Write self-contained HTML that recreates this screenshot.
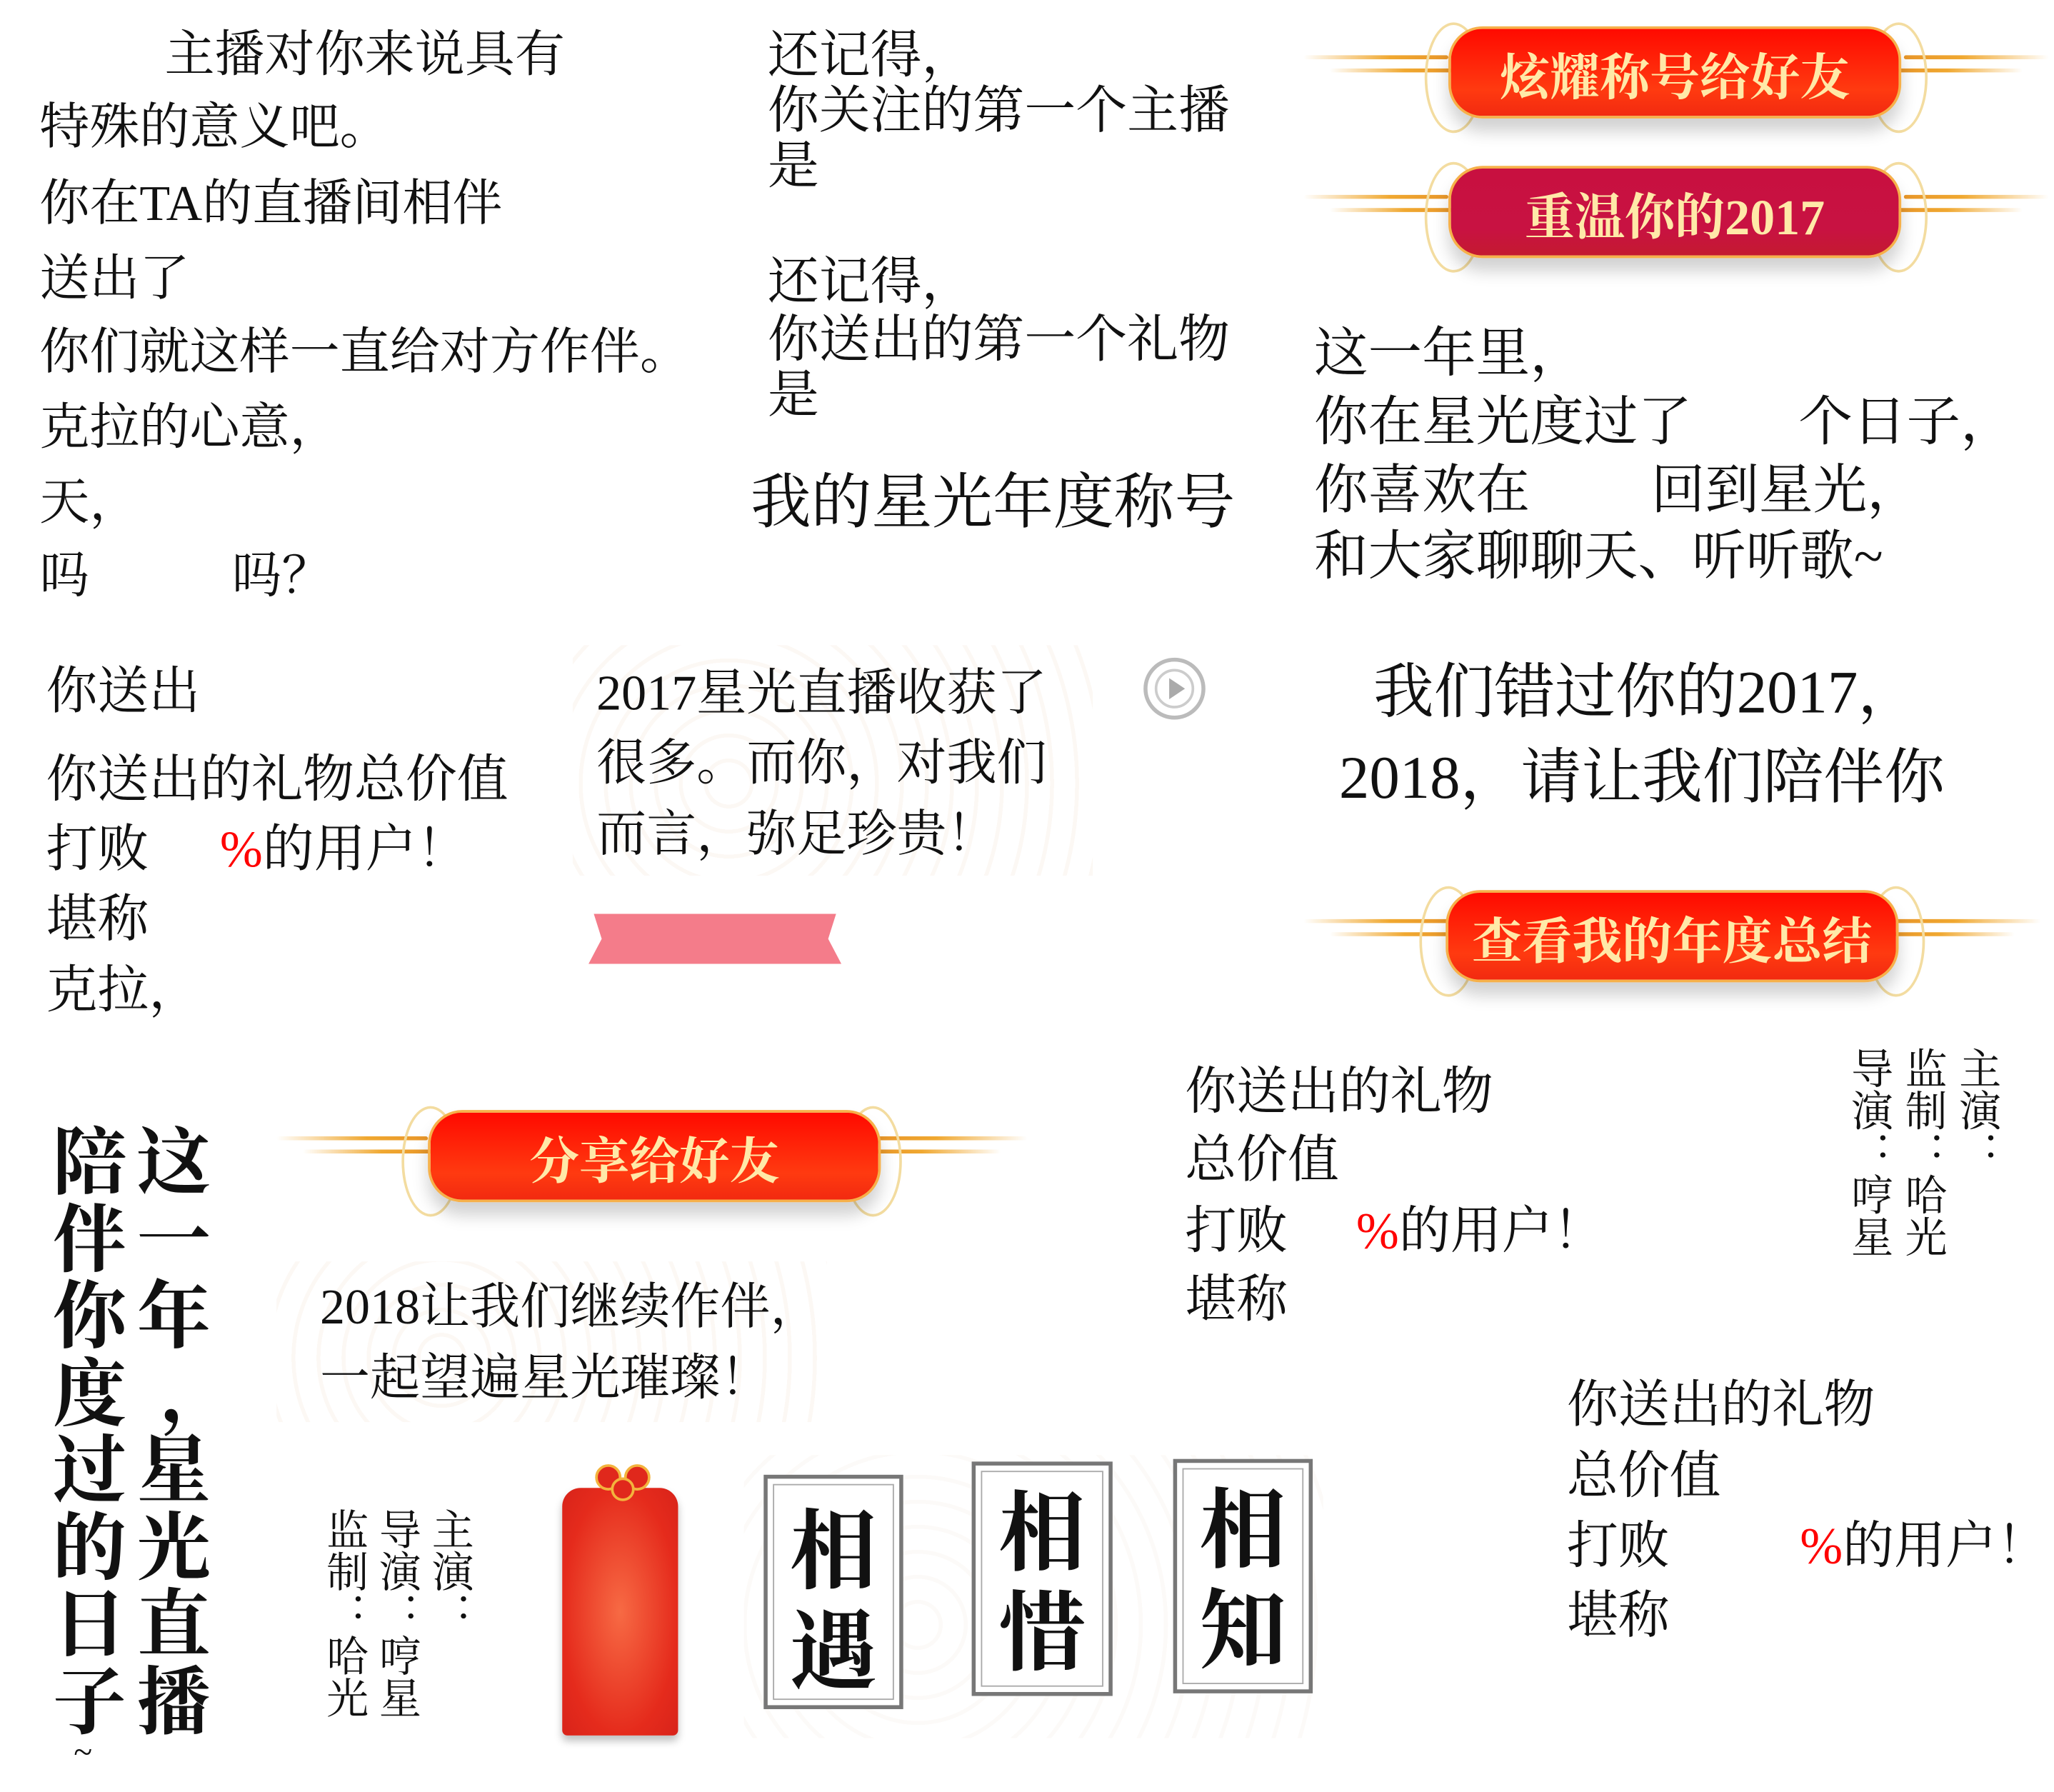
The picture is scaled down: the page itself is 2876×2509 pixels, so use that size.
<!DOCTYPE html>
<html><head><meta charset="utf-8">
<style>
html,body{margin:0;padding:0;background:#fff;}
body{width:2876px;height:2509px;overflow:hidden;position:relative;}
#w{position:absolute;left:0;top:0;width:1560px;height:1361px;transform:scale(1.84359);transform-origin:0 0;
font-family:"Liberation Serif","Noto Serif CJK SC",serif;color:#111;}
.t{position:absolute;white-space:nowrap;line-height:1;}
.r{color:#f00;}
.ban{position:absolute;height:90px;}
.ban .ln{position:absolute;height:3px;background:linear-gradient(90deg,rgba(240,170,60,0),#f0a830 60%,#e8962a);border-radius:2px;}
.ban .ln2{position:absolute;height:3px;background:linear-gradient(270deg,rgba(240,170,60,0),#f0a830 60%,#e8962a);border-radius:2px;}
.ban .cl{position:absolute;width:40px;height:80px;border:2px solid #f3dca0;border-radius:50%;top:5px;}
.ban .body{position:absolute;top:8px;height:66px;border-radius:26px;box-shadow:0 10px 12px rgba(0,0,0,.18);
display:flex;align-items:center;justify-content:center;color:#ffe9a8;font-weight:bold;font-size:38px;border:2px solid #f6b04a;}
.box{position:absolute;border:3px solid #777;background:#fff;}
.box .in{position:absolute;left:4px;top:4px;right:4px;bottom:4px;border:1px solid #aaa;}
.box .tx{position:absolute;left:0;right:0;text-align:center;font-weight:bold;font-size:66px;line-height:76px;font-family:"Noto Serif CJK SC",serif;}
.vt{position:absolute;writing-mode:vertical-rl;line-height:1;white-space:nowrap;}
.big{position:absolute;width:60px;font-size:56px;font-weight:bold;line-height:58.5px;text-align:center;font-family:"Noto Serif CJK SC",serif;}
.faint{position:absolute;background:repeating-radial-gradient(circle at 30% 60%,#fff 0 16px,#faf4ef 16px 19px);opacity:.7;}
</style></head><body><div id="w">

<!-- column 1 -->
<div class="t" style="left:125px;top:23px;font-size:38px">主播对你来说具有</div>
<div class="t" style="left:30px;top:78px;font-size:38px">特殊的意义吧。</div>
<div class="t" style="left:30px;top:136px;font-size:38px">你在TA的直播间相伴</div>
<div class="t" style="left:30px;top:193px;font-size:38px">送出了</div>
<div class="t" style="left:30px;top:249px;font-size:38px">你们就这样一直给对方作伴。</div>
<div class="t" style="left:30px;top:306px;font-size:38px">克拉的心意，</div>
<div class="t" style="left:30px;top:363px;font-size:38px">天，</div>
<div class="t" style="left:30px;top:419px;font-size:38px">吗</div>
<div class="t" style="left:176px;top:419px;font-size:38px">吗？</div>

<!-- column 2 -->
<div class="t" style="left:583px;top:23px;font-size:39px">还记得，</div>
<div class="t" style="left:583px;top:65px;font-size:39px">你关注的第一个主播</div>
<div class="t" style="left:583px;top:107px;font-size:39px">是</div>
<div class="t" style="left:583px;top:195px;font-size:39px">还记得，</div>
<div class="t" style="left:583px;top:239px;font-size:39px">你送出的第一个礼物</div>
<div class="t" style="left:583px;top:281px;font-size:39px">是</div>
<div class="t" style="left:570px;top:359px;font-size:46px">我的星光年度称号</div>

<!-- column 3 -->
<div class="t" style="left:998px;top:248px;font-size:41px">这一年里，</div>
<div class="t" style="left:998px;top:300px;font-size:41px">你在星光度过了</div>
<div class="t" style="left:1366px;top:300px;font-size:41px">个日子，</div>
<div class="t" style="left:998px;top:352px;font-size:41px">你喜欢在</div>
<div class="t" style="left:1254px;top:352px;font-size:41px">回到星光，</div>
<div class="t" style="left:998px;top:402px;font-size:41px">和大家聊聊天、听听歌~</div>

<!-- row 2 -->
<div class="t" style="left:35px;top:506px;font-size:39px">你送出</div>
<div class="t" style="left:35px;top:573px;font-size:39px">你送出的礼物总价值</div>
<div class="t" style="left:35px;top:626px;font-size:39px">打败</div>
<div class="t" style="left:167px;top:626px;font-size:39px"><span class="r">%</span>的用户！</div>
<div class="t" style="left:35px;top:679px;font-size:39px">堪称</div>
<div class="t" style="left:35px;top:733px;font-size:39px">克拉，</div>

<div class="faint" style="left:435px;top:490px;width:395px;height:175px"></div>
<div class="t" style="left:453px;top:508px;font-size:38px">2017星光直播收获了</div>
<div class="t" style="left:453px;top:561px;font-size:38px">很多。而你，对我们</div>
<div class="t" style="left:453px;top:615px;font-size:38px">而言，弥足珍贵！</div>
<svg style="position:absolute;left:866px;top:497px" width="52" height="52"><circle cx="26" cy="26" r="22" fill="none" stroke="#bbb" stroke-width="3"/><circle cx="26" cy="26" r="14" fill="none" stroke="#ccc" stroke-width="2"/><path d="M22 18 L34 26 L22 34Z" fill="#aaa"/></svg>
<svg style="position:absolute;left:445px;top:692px" width="196" height="42"><path d="M6 2 H190 L184 21 L194 40 H2 L12 21Z" fill="#f47c8a"/></svg>

<div class="t" style="left:1043px;top:503px;font-size:46px">我们错过你的2017，</div>
<div class="t" style="left:1017px;top:568px;font-size:46px">2018，请让我们陪伴你</div>

<div class="t" style="left:900px;top:810px;font-size:39px">你送出的礼物</div>
<div class="t" style="left:900px;top:862px;font-size:39px">总价值</div>
<div class="t" style="left:900px;top:916px;font-size:39px">打败</div>
<div class="t" style="left:1030px;top:916px;font-size:39px"><span class="r">%</span>的用户！</div>
<div class="t" style="left:900px;top:968px;font-size:39px">堪称</div>

<div class="vt" style="left:1486px;top:795px;font-size:32px">主演：</div>
<div class="vt" style="left:1445px;top:795px;font-size:32px">监制：哈光</div>
<div class="vt" style="left:1404px;top:795px;font-size:32px">导演：哼星</div>

<div class="t" style="left:1190px;top:1048px;font-size:39px">你送出的礼物</div>
<div class="t" style="left:1190px;top:1102px;font-size:39px">总价值</div>
<div class="t" style="left:1190px;top:1155px;font-size:39px">打败</div>
<div class="t" style="left:1367px;top:1155px;font-size:39px"><span class="r">%</span>的用户！</div>
<div class="t" style="left:1190px;top:1208px;font-size:39px">堪称</div>

<!-- bottom left vertical -->
<div class="big" style="left:102px;top:850px">这<br>一<br>年<br><span style="position:relative;left:18px">，</span><br>星<br>光<br>直<br>播</div>
<div class="big" style="left:38px;top:850px">陪<br>伴<br>你<br>度<br>过<br>的<br>日<br>子</div>
<div class="t" style="left:56px;top:1318px;font-size:26px">~</div>

<div class="faint" style="left:210px;top:958px;width:418px;height:122px"></div>
<div class="t" style="left:243px;top:974px;font-size:38px">2018让我们继续作伴，</div>
<div class="t" style="left:243px;top:1028px;font-size:38px">一起望遍星光璀璨！</div>

<div class="vt" style="left:326px;top:1145px;font-size:32px">主演：</div>
<div class="vt" style="left:286px;top:1145px;font-size:32px">导演：哼星</div>
<div class="vt" style="left:246px;top:1145px;font-size:32px">监制：哈光</div>

<!-- envelope -->
<div style="position:absolute;left:427px;top:1130px;width:88px;height:188px;border-radius:14px 14px 4px 4px;background:radial-gradient(ellipse at 50% 50%,#f76a44,#e52b1c 70%,#d8231a);box-shadow:0 4px 6px rgba(0,0,0,.25)"></div>
<div style="position:absolute;left:452px;top:1112px;width:16px;height:16px;border-radius:50%;background:#e0281c;border:2px solid #f3b33d"></div>
<div style="position:absolute;left:474px;top:1112px;width:16px;height:16px;border-radius:50%;background:#e0281c;border:2px solid #f3b33d"></div>
<div style="position:absolute;left:464px;top:1122px;width:14px;height:14px;border-radius:50%;background:#e0281c;border:2px solid #f3b33d"></div>

<div class="faint" style="left:565px;top:1105px;width:440px;height:215px;opacity:.45"></div>
<div class="box" style="left:580px;top:1120px;width:100px;height:172px"><div class="in"></div><div class="tx" style="top:12px">相<br>遇</div></div>
<div class="box" style="left:738px;top:1110px;width:101px;height:172px"><div class="in"></div><div class="tx" style="top:8px">相<br>惜</div></div>
<div class="box" style="left:891px;top:1108px;width:100px;height:172px"><div class="in"></div><div class="tx" style="top:8px">相<br>知</div></div>

<!-- banners -->
<div class="ban" style="left:990px;top:12px;width:566px">
 <div class="ln" style="left:0;top:30px;width:110px"></div><div class="ln" style="left:20px;top:40px;width:95px"></div>
 <div class="ln2" style="right:0;top:30px;width:110px"></div><div class="ln2" style="right:20px;top:40px;width:95px"></div>
 <div class="cl" style="left:92px"></div><div class="cl" style="right:92px"></div>
 <div class="body" style="left:110px;width:340px;background:linear-gradient(#ff0a00,#ff3a10 70%,#f22a10)">炫耀称号给好友</div>
</div>
<div class="ban" style="left:990px;top:118px;width:566px">
 <div class="ln" style="left:0;top:30px;width:110px"></div><div class="ln" style="left:20px;top:40px;width:95px"></div>
 <div class="ln2" style="right:0;top:30px;width:110px"></div><div class="ln2" style="right:20px;top:40px;width:95px"></div>
 <div class="cl" style="left:92px"></div><div class="cl" style="right:92px"></div>
 <div class="body" style="left:110px;width:340px;background:linear-gradient(#c81040,#c81242 70%,#c41a30)">重温你的2017</div>
</div>
<div class="ban" style="left:990px;top:668px;width:560px">
 <div class="ln" style="left:0;top:30px;width:110px"></div><div class="ln" style="left:20px;top:40px;width:95px"></div>
 <div class="ln2" style="right:0;top:30px;width:110px"></div><div class="ln2" style="right:20px;top:40px;width:95px"></div>
 <div class="cl" style="left:88px"></div><div class="cl" style="right:88px"></div>
 <div class="body" style="left:108px;width:340px;background:linear-gradient(#ff0a00,#ff3a10 70%,#f22a10)">查看我的年度总结</div>
</div>
<div class="ban" style="left:210px;top:835px;width:570px">
 <div class="ln" style="left:0;top:28px;width:115px"></div><div class="ln" style="left:20px;top:38px;width:100px"></div>
 <div class="ln2" style="right:0;top:28px;width:115px"></div><div class="ln2" style="right:20px;top:38px;width:100px"></div>
 <div class="cl" style="left:95px"></div><div class="cl" style="right:95px"></div>
 <div class="body" style="left:115px;width:340px;background:linear-gradient(#ff0a00,#ff3a10 70%,#f22a10)">分享给好友</div>
</div>

</div></body></html>
